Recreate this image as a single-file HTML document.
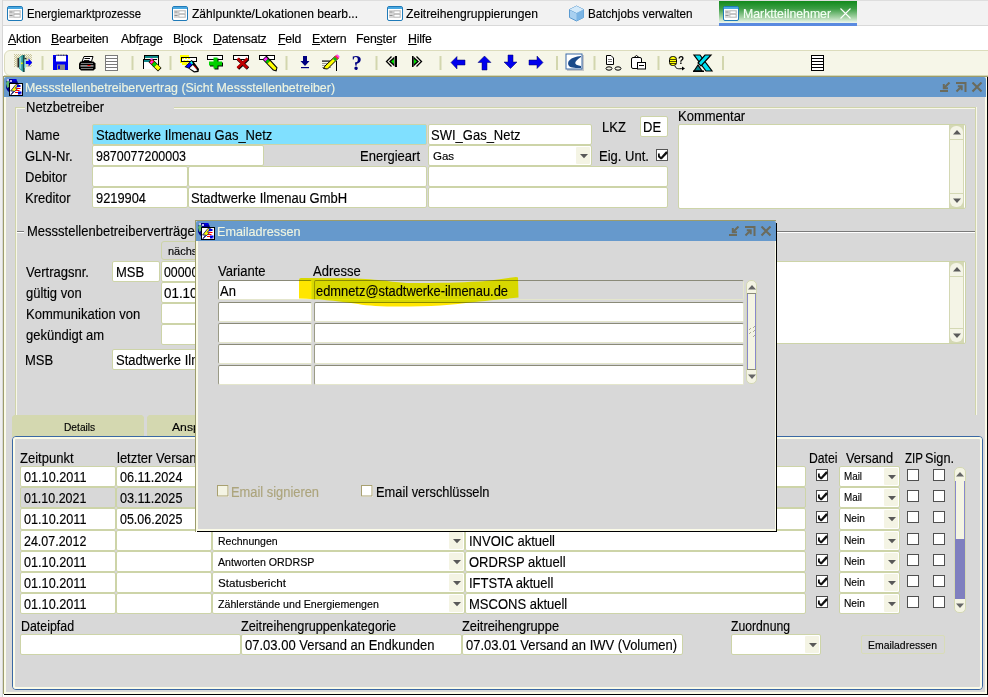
<!DOCTYPE html>
<html><head><meta charset="utf-8"><style>
*{margin:0;padding:0;box-sizing:content-box}
html,body{width:988px;height:697px;overflow:hidden;background:#fff;font-family:"Liberation Sans", sans-serif;}
div{position:absolute}
.t{white-space:nowrap;line-height:normal;-webkit-text-stroke:0.15px currentColor}
svg{position:absolute}
</style></head><body>
<div class="" style="left:0px;top:0px;width:988px;height:697px;background:#ffffff"></div><div class="" style="left:0px;top:0px;width:2px;height:697px;background:#efefef"></div><div class="" style="left:2px;top:0px;width:1px;height:697px;background:#d6d6d6"></div><div class="" style="left:3px;top:0px;width:985px;height:1px;background:#dedede"></div><div class="" style="left:3px;top:1px;width:985px;height:24px;background:#f2f2f2"></div><div class="" style="left:3px;top:25px;width:985px;height:1px;background:#d9d9d9"></div><svg style="left:7px;top:6px" width="16" height="15" viewBox="0 0 16 15"><rect x="0.5" y="0.5" width="15" height="14" rx="1.5" fill="#fff" stroke="#1f7ab8"/><rect x="1" y="1" width="14" height="2" fill="#4aa8e0"/><rect x="2" y="4" width="12" height="8" fill="#d8d8d8"/><rect x="2.5" y="5.5" width="3" height="1" fill="#909090"/><rect x="2.5" y="9" width="3" height="1" fill="#909090"/><rect x="7" y="5" width="6" height="2.5" fill="#fff" stroke="#a0a0a0" stroke-width="0.5"/><rect x="7" y="8.5" width="6" height="2.5" fill="#fff" stroke="#a0a0a0" stroke-width="0.5"/></svg><div class="t" style="left:27px;top:6.6px;font-size:12.6px;color:#000;transform:scaleX(0.9052);transform-origin:0 0;">Energiemarktprozesse</div><svg style="left:172px;top:6px" width="16" height="15" viewBox="0 0 16 15"><rect x="0.5" y="0.5" width="15" height="14" rx="1.5" fill="#fff" stroke="#1f7ab8"/><rect x="1" y="1" width="14" height="2" fill="#4aa8e0"/><rect x="2" y="4" width="12" height="8" fill="#d8d8d8"/><rect x="2.5" y="5.5" width="3" height="1" fill="#909090"/><rect x="2.5" y="9" width="3" height="1" fill="#909090"/><rect x="7" y="5" width="6" height="2.5" fill="#fff" stroke="#a0a0a0" stroke-width="0.5"/><rect x="7" y="8.5" width="6" height="2.5" fill="#fff" stroke="#a0a0a0" stroke-width="0.5"/></svg><div class="t" style="left:191.5px;top:6.6px;font-size:12.6px;color:#000;transform:scaleX(0.9564);transform-origin:0 0;">Zählpunkte/Lokationen bearb...</div><svg style="left:387px;top:6px" width="16" height="15" viewBox="0 0 16 15"><rect x="0.5" y="0.5" width="15" height="14" rx="1.5" fill="#fff" stroke="#1f7ab8"/><rect x="1" y="1" width="14" height="2" fill="#4aa8e0"/><rect x="2" y="4" width="12" height="8" fill="#d8d8d8"/><rect x="2.5" y="5.5" width="3" height="1" fill="#909090"/><rect x="2.5" y="9" width="3" height="1" fill="#909090"/><rect x="7" y="5" width="6" height="2.5" fill="#fff" stroke="#a0a0a0" stroke-width="0.5"/><rect x="7" y="8.5" width="6" height="2.5" fill="#fff" stroke="#a0a0a0" stroke-width="0.5"/></svg><div class="t" style="left:406px;top:6.6px;font-size:12.6px;color:#000;transform:scaleX(0.9625);transform-origin:0 0;">Zeitreihengruppierungen</div><svg style="left:568px;top:5px" width="17" height="17" viewBox="0 0 17 17"><path d="M8.5 1 L15.5 4.5 L15.5 12.5 L8.5 16 L1.5 12.5 L1.5 4.5 Z" fill="#a8d0f0" stroke="#5a9ad0" stroke-width="1"/><path d="M1.5 4.5 L8.5 8 L15.5 4.5" fill="none" stroke="#5a9ad0" stroke-width="1"/><path d="M8.5 8 L8.5 16 L15.5 12.5 L15.5 4.5 Z" fill="#7ab4e4"/><path d="M8.5 1 L15.5 4.5 L8.5 8 L1.5 4.5 Z" fill="#d4eafa"/></svg><div class="t" style="left:588px;top:6.6px;font-size:12.6px;color:#000;transform:scaleX(0.9275);transform-origin:0 0;">Batchjobs verwalten</div><div class="" style="left:719px;top:1px;width:138px;height:22px;background:linear-gradient(#118a1c 0%,#3c9e44 35%,#a8d4a8 75%,#f0f8f0 100%)"></div><div class="" style="left:719px;top:23px;width:138px;height:3px;background:#5a8ae0"></div><svg style="left:723px;top:6px" width="16" height="15" viewBox="0 0 16 15"><rect x="0.5" y="0.5" width="15" height="14" rx="1.5" fill="#fff" stroke="#1f7ab8"/><rect x="1" y="1" width="14" height="2" fill="#4aa8e0"/><rect x="2" y="4" width="12" height="8" fill="#d8d8d8"/><rect x="2.5" y="5.5" width="3" height="1" fill="#909090"/><rect x="2.5" y="9" width="3" height="1" fill="#909090"/><rect x="7" y="5" width="6" height="2.5" fill="#fff" stroke="#a0a0a0" stroke-width="0.5"/><rect x="7" y="8.5" width="6" height="2.5" fill="#fff" stroke="#a0a0a0" stroke-width="0.5"/></svg><div class="t" style="left:743px;top:6.6px;font-size:12.6px;color:#f4fff4;transform:scaleX(0.9752);transform-origin:0 0;">Marktteilnehmer</div><svg style="left:840px;top:8px" width="11" height="11" viewBox="0 0 11 11"><path d="M0.5 0.5 L10.5 10.5 M10.5 0.5 L0.5 10.5" stroke="#ffffff" stroke-width="1.1"/></svg><div class="t" style="left:8px;top:31.869999999999997px;font-size:12.3px;color:#000;letter-spacing:-0.2px"><u style="text-underline-offset:1px">A</u>ktion</div><div class="t" style="left:51px;top:31.869999999999997px;font-size:12.3px;color:#000;letter-spacing:-0.2px"><u style="text-underline-offset:1px">B</u>earbeiten</div><div class="t" style="left:121px;top:31.869999999999997px;font-size:12.3px;color:#000;letter-spacing:-0.2px">Abf<u style="text-underline-offset:1px">r</u>age</div><div class="t" style="left:173px;top:31.869999999999997px;font-size:12.3px;color:#000;letter-spacing:-0.2px">B<u style="text-underline-offset:1px">l</u>ock</div><div class="t" style="left:213px;top:31.869999999999997px;font-size:12.3px;color:#000;letter-spacing:-0.2px"><u style="text-underline-offset:1px">D</u>atensatz</div><div class="t" style="left:278px;top:31.869999999999997px;font-size:12.3px;color:#000;letter-spacing:-0.2px"><u style="text-underline-offset:1px">F</u>eld</div><div class="t" style="left:312px;top:31.869999999999997px;font-size:12.3px;color:#000;letter-spacing:-0.2px"><u style="text-underline-offset:1px">E</u>xtern</div><div class="t" style="left:356px;top:31.869999999999997px;font-size:12.3px;color:#000;letter-spacing:-0.2px">Fen<u style="text-underline-offset:1px">s</u>ter</div><div class="t" style="left:408px;top:31.869999999999997px;font-size:12.3px;color:#000;letter-spacing:-0.2px"><u style="text-underline-offset:1px">H</u>ilfe</div><div class="" style="left:4px;top:50px;width:990px;height:24px;background:#f6f6e8;border:1px solid #dcdcbc;border-radius:6px 0 0 6px"></div><div class="" style="left:4px;top:75px;width:984px;height:1px;background:#d4d8b4"></div><svg style="left:0;top:0" width="988" height="80" viewBox="0 0 988 80"><rect x="41.5" y="56" width="2" height="14" fill="#d2d6ae"/><rect x="131.5" y="56" width="2" height="14" fill="#d2d6ae"/><rect x="169.5" y="56" width="2" height="14" fill="#d2d6ae"/><rect x="285.5" y="56" width="2" height="14" fill="#d2d6ae"/><rect x="375.5" y="56" width="2" height="14" fill="#d2d6ae"/><rect x="439.5" y="56" width="2" height="14" fill="#d2d6ae"/><rect x="556" y="56" width="2" height="14" fill="#d2d6ae"/><rect x="593.5" y="56" width="2" height="14" fill="#d2d6ae"/><rect x="657.5" y="56" width="2" height="14" fill="#d2d6ae"/><rect x="722" y="56" width="2" height="14" fill="#d2d6ae"/><defs><pattern id="chk" x="0" y="0" width="2" height="2" patternUnits="userSpaceOnUse"><rect width="2" height="2" fill="#f4f4e4"/><rect width="1" height="1" fill="#c8c49a"/><rect x="1" y="1" width="1" height="1" fill="#c8c49a"/></pattern></defs><rect x="14" y="54" width="18" height="13" fill="url(#chk)"/><rect x="16" y="57" width="14" height="10" fill="#d8d4ac"/><rect x="17.5" y="58" width="1.6" height="9.5" fill="#2a2a2a"/><path d="M19 57.5 L22.5 55 L24.5 55 L24.5 72 L23 72 L19 68.5 Z" fill="#2a9a9a"/><path d="M19.5 58 L21.3 56.7 L21.3 69.5 L19.5 68 Z" fill="#98d4d4"/><rect x="23" y="55" width="1.5" height="17" fill="#1e4848"/><rect x="21" y="62.5" width="1.6" height="1.6" fill="#f0f000"/><rect x="24.5" y="58" width="2" height="1.4" fill="#2a2a2a"/><rect x="24.5" y="59.4" width="1.2" height="8.5" fill="#80f0ff"/><path d="M25.8 61 L28.6 61 L28.6 58.6 L32.2 62.5 L28.6 66.4 L28.6 64 L25.8 64 Z" fill="#0000ff"/><rect x="53" y="55" width="15" height="15" fill="#0000f0"/><rect x="56" y="55.5" width="10" height="6" fill="#fff"/><rect x="56.5" y="54.6" width="1" height="1" fill="#000"/><rect x="58.1" y="54.6" width="1" height="1" fill="#000"/><rect x="59.7" y="54.6" width="1" height="1" fill="#000"/><rect x="61.3" y="54.6" width="1" height="1" fill="#000"/><rect x="62.9" y="54.6" width="1" height="1" fill="#000"/><rect x="64.5" y="54.6" width="1" height="1" fill="#000"/><rect x="66.1" y="54.6" width="1" height="1" fill="#000"/><rect x="54" y="57.5" width="1" height="1" fill="#000"/><rect x="57" y="64.5" width="8" height="5.5" fill="#8a8a8a"/><rect x="58" y="65.5" width="2" height="3.5" fill="#0000f0"/><path d="M84 56.5 L93 56.5 L91.5 61.5 L82 61.5 Z" fill="#fff" stroke="#000" stroke-width="1"/><rect x="84.5" y="58" width="5.5" height="1" fill="#000"/><rect x="83.8" y="60" width="5.5" height="0.9" fill="#000"/><path d="M80.5 61.5 L93.5 61.5 L95.5 63.5 L95.5 68.5 L93.5 70.5 L81 70.5 L79 68.5 L79 63.5 Z" fill="#000"/><rect x="81" y="63" width="12" height="1" fill="#7a7a7a"/><rect x="80.5" y="65" width="13" height="1.8" fill="#8a8a8a"/><rect x="87.5" y="65" width="3" height="1" fill="#ff0000"/><rect x="81" y="68" width="12" height="1" fill="#7a7a7a"/><g shape-rendering="crispEdges"><rect x="105" y="55" width="13" height="16" fill="#7a7a7a"/><rect x="106" y="56" width="11" height="14" fill="#fff"/><rect x="106" y="58" width="11" height="1" fill="#7a7a7a"/><rect x="106" y="61" width="11" height="1" fill="#7a7a7a"/><rect x="106" y="64" width="11" height="1" fill="#7a7a7a"/><rect x="106" y="67" width="11" height="1" fill="#7a7a7a"/></g><g shape-rendering="crispEdges"><rect x="144" y="55" width="15" height="1.3" fill="#000"/><rect x="145" y="56.3" width="13" height="1.2" fill="#108888"/><rect x="158" y="55" width="1.3" height="10" fill="#000"/><rect x="144" y="55" width="1.3" height="4" fill="#000"/><rect x="143" y="59" width="14" height="1.3" fill="#000"/><rect x="144" y="60.3" width="6" height="1.2" fill="#108888"/><rect x="143" y="59" width="1.3" height="9.5" fill="#000"/><rect x="144.3" y="61.5" width="8" height="7" fill="#fff"/></g><path d="M148.5 62 L152 58.5 L161.5 68 L158 71.5 Z" fill="#000"/><path d="M149.3 62 L152 59.3 L154.5 61.8 L151.8 64.5 Z" fill="#ff1010"/><path d="M150 62.5 L152 60.5 L153.2 61.7 L151.2 63.7 Z" fill="#ff30ff"/><path d="M151.8 64.5 L154.5 61.8 L157 64.3 L154.3 67 Z" fill="#00d000"/><path d="M154.3 67 L157 64.3 L160.5 67.8 L158 70.5 Z" fill="#ffff00"/><rect x="150.5" y="58.5" width="2" height="1.5" fill="#ff30ff"/><rect x="180" y="55" width="9" height="8" fill="#ffff00"/><rect x="182" y="63" width="5" height="2" fill="#ffff00"/><rect x="181.5" y="57.5" width="15" height="4" fill="#fff" stroke="#000" stroke-width="1"/><rect x="182" y="58" width="2" height="1" fill="#ffff00"/><rect x="185" y="58" width="2" height="1" fill="#ffff00"/><rect x="188" y="58" width="2" height="1" fill="#ffff00"/><rect x="183.5" y="60" width="2" height="1" fill="#ffff00"/><rect x="186.5" y="60" width="2" height="1" fill="#ffff00"/><path d="M184.5 67 L191.5 60 L193.5 61.5 L199 69 L198.5 72 L194 72.5 L188.5 68.5 Z" fill="#000"/><path d="M186 66.5 L190 62.5 L192 64.5 L188.5 68 Z" fill="#0000ff"/><path d="M190 62.5 L191.5 61 L193 63.5 L192 64.5 Z" fill="#00ffff"/><path d="M189.5 68.3 L192.8 65 L197.5 70.5 L194.5 71.3 Z" fill="#fff"/><path d="M194 65.5 L196.5 68.5" stroke="#ff0000" stroke-width="1"/><rect x="207.5" y="55.5" width="15" height="4" fill="#fff" stroke="#000" stroke-width="1"/><rect x="214.5" y="58.5" width="4" height="11" fill="#000"/><rect x="210" y="62.5" width="13" height="4" fill="#000"/><rect x="213.5" y="57.5" width="4" height="11" fill="#00d000"/><rect x="209" y="61.5" width="13" height="4" fill="#00d000"/><rect x="233.5" y="55.5" width="15" height="4" fill="#fff" stroke="#000" stroke-width="1"/><path d="M238 59 L248 68.5 M248 59 L238 68.5" stroke="#000" stroke-width="3.4"/><path d="M237.5 58.5 L247.5 68 M247.5 58.5 L237.5 68" stroke="#c00000" stroke-width="2.6"/><rect x="259.5" y="55.5" width="15" height="4" fill="#fff" stroke="#000" stroke-width="1"/><path d="M262.5 59.5 L266.5 55.5 L277.5 67.5 L276.5 71.5 L273 70.5 Z" fill="#000"/><path d="M263.5 59.5 L266 57 L268 59 L265.5 61.5 Z" fill="#ff20ff"/><path d="M265.5 61.5 L268 59 L270 61 L267.5 63.5 Z" fill="#00c000"/><path d="M267.5 63.5 L270 61 L276.5 68 L275.5 70.3 L273.5 69.5 Z" fill="#ffff00"/><rect x="303" y="56" width="4" height="5.5" fill="#000080"/><path d="M300.5 61 L309.5 61 L305 66 Z" fill="#000080"/><rect x="301" y="67" width="8" height="1.2" fill="#000080"/><rect x="322" y="61" width="9" height="0.8" fill="#888"/><rect x="322" y="63" width="9" height="0.8" fill="#888"/><rect x="322" y="65" width="9" height="0.8" fill="#888"/><rect x="322" y="67" width="9" height="0.8" fill="#888"/><rect x="322" y="60.5" width="8" height="1" fill="#000"/><rect x="336" y="61" width="1" height="10" fill="#000"/><path d="M323.5 68.5 L325 66 L335.5 56 L338 58.5 L327.5 69 Z" fill="#ffff00" stroke="#000" stroke-width="1"/><path d="M334 57.5 L337 54.5 L339.5 57 L336.5 60 Z" fill="#ff2040"/><path d="M333 59 L335 57 L337 59 L335 61 Z" fill="#00c000"/><path d="M336 55.5 L337.5 54.5 L339.5 56.5 L338.5 58 Z" fill="#ff40ff"/><text x="351.5" y="70.5" font-family="Liberation Serif" font-weight="bold" font-size="20" fill="#000080" transform="translate(351.5 0) scale(1.05 1) translate(-351.5 0)">?</text><path d="M391.5 56.5 L386.5 61.5 L391.5 66.5" fill="none" stroke="#000" stroke-width="1.3"/><path d="M394.5 56.5 L389 61.5 L394.5 66.5 Z" fill="#000"/><path d="M394 59 L391 61.5 L394 64 Z" fill="#00e000"/><rect x="395" y="56" width="2" height="11" fill="#000"/><path d="M416.5 56.5 L421.5 61.5 L416.5 66.5" fill="none" stroke="#000" stroke-width="1.3"/><path d="M413.5 56.5 L419 61.5 L413.5 66.5 Z" fill="#000"/><path d="M414 59 L417 61.5 L414 64 Z" fill="#00e000"/><rect x="412" y="56" width="1.5" height="11" fill="#000"/><path d="M451 62.5 L457 56.5 L457 60 L465 60 L465 65 L457 65 L457 69 Z" fill="#0000ee" stroke="#000060" stroke-width="0.5"/><path d="M484.5 56 L491 62.5 L487 62.5 L487 70 L482 70 L482 62.5 L478 62.5 Z" fill="#0000ee" stroke="#000060" stroke-width="0.5"/><path d="M508 55 L513 55 L513 62 L517 62 L510.5 68.5 L504 62 L508 62 Z" fill="#0000ee" stroke="#000060" stroke-width="0.5"/><path d="M529 60 L537 60 L537 56 L543 62.5 L537 68.5 L537 65 L529 65 Z" fill="#0000ee" stroke="#000060" stroke-width="0.5"/><rect x="567" y="55" width="17" height="16" fill="#c8c8c8"/><rect x="566" y="54" width="16" height="15" fill="#fff" stroke="#3a6aa8" stroke-width="1"/><path d="M581 56 C570 57 566 62 569 66 C571 68 577 68 581 68 L581 66 C575 65 572 63 581 57 Z" fill="#1a4a8a"/><path d="M606.5 55.5 L611 55.5 L613.5 58 L613.5 64.5 L606.5 64.5 Z" fill="#fff" stroke="#000" stroke-width="1"/><rect x="608" y="59" width="4" height="0.8" fill="#555"/><rect x="608" y="61" width="4" height="0.8" fill="#555"/><ellipse cx="609" cy="68.5" rx="3" ry="1.7" fill="none" stroke="#000" stroke-width="1"/><ellipse cx="618" cy="68.5" rx="3" ry="1.7" fill="none" stroke="#000" stroke-width="1"/><rect x="631.5" y="57.5" width="10" height="11" rx="1.5" fill="#fff" stroke="#000" stroke-width="1"/><path d="M634 57.5 L636.5 55.5 L639 57.5 Z" fill="#fff" stroke="#000" stroke-width="1"/><rect x="637.5" y="62.5" width="8" height="6.5" fill="#fff" stroke="#000" stroke-width="1"/><rect x="639" y="65" width="5" height="1" fill="#000"/><rect x="669.5" y="56.5" width="7" height="9" rx="3" fill="#ffff00" stroke="#000" stroke-width="1"/><rect x="670" y="59" width="6" height="0.7" fill="#000"/><rect x="670" y="61" width="6" height="0.7" fill="#000"/><rect x="670" y="63" width="6" height="0.7" fill="#000"/><text x="678" y="64" font-family="Liberation Sans" font-weight="bold" font-size="10" fill="#000">?</text><path d="M675 66 C676 69 678 69 683 68.5" fill="none" stroke="#000" stroke-width="1"/><path d="M682 66.5 L685 68.5 L682 70.5 Z" fill="#000"/><path d="M694 55 L700 55 L712 71 L706 71 Z" fill="#00e0f0" stroke="#000" stroke-width="1.2"/><path d="M705 55 L711 55 L701 66 L698 63 Z" fill="#00e0f0" stroke="#000" stroke-width="1.2"/><path d="M694 71 L698 65 L702 71 Z" fill="#008890" stroke="#000" stroke-width="1.2"/><rect x="693" y="70.5" width="11" height="1.5" fill="#000"/><g shape-rendering="crispEdges"><rect x="811" y="55" width="13" height="16" rx="1" fill="#000"/><rect x="812" y="56" width="11" height="14" fill="#fff"/><rect x="812" y="58" width="11" height="1.2" fill="#000"/><rect x="812" y="61" width="11" height="1.2" fill="#000"/><rect x="812" y="64" width="11" height="1.2" fill="#000"/><rect x="812" y="67" width="11" height="1.2" fill="#000"/></g></svg><div class="" style="left:3px;top:76px;width:985px;height:1px;background:#9c9c6c"></div><div class="" style="left:3px;top:77px;width:1px;height:617px;background:#9c9c6c"></div><div class="" style="left:4px;top:97px;width:982px;height:596px;background:#d8d8d8"></div><div class="" style="left:4px;top:97px;width:2px;height:596px;background:#fbfbe8"></div><div class="" style="left:985px;top:77px;width:2px;height:617px;background:#fbfbe8"></div><div class="" style="left:987px;top:77px;width:1px;height:618px;background:#000"></div><div class="" style="left:4px;top:692px;width:983px;height:2px;background:#fbfbe8"></div><div class="" style="left:4px;top:694px;width:983px;height:1px;background:#000"></div><div class="" style="left:4px;top:77px;width:982px;height:20px;background:#6699cc;border-radius:2px 2px 0 0"></div><svg style="left:6px;top:79px" width="17" height="17" viewBox="0 0 17 17"><path d="M6 -0.5 C10 -0.5 12 2 12 5 L12 11 L3 13 C1 11.5 -0.5 9 -0.5 5.5 C-0.5 2 2.5 -0.5 6 -0.5 Z" fill="#00008a"/><path d="M0 4 C0.5 2.5 1.5 1.5 3 1 L3.5 3 L3 8 L1 9 Z" fill="#60b870"/><rect x="1" y="0" width="2" height="2" fill="#c0b8f0"/><rect x="4" y="1" width="2" height="2" fill="#c0b8f0"/><rect x="6.5" y="-0.5" width="4" height="3" fill="#0000e0"/><rect x="3" y="4" width="14" height="13" fill="#000"/><rect x="4" y="5" width="12" height="11" fill="#fff"/><path d="M9.8 5.6 L4.6 12 L7.6 12 L4.8 15.8 L12.2 9.2 L9.4 9.2 L12.6 5.6 Z" fill="#ffff00" stroke="#00007a" stroke-width="0.8"/><rect x="11" y="6" width="3.5" height="2" fill="#0000e0"/><rect x="10.5" y="9" width="4" height="1" fill="#ff0000"/><rect x="10" y="11" width="3.5" height="1" fill="#ff0000"/><rect x="9" y="13" width="3" height="1" fill="#ff0000"/><rect x="12" y="12.5" width="3.5" height="3" fill="#0000e0"/><rect x="14.5" y="14.5" width="1" height="1" fill="#fff"/></svg><div class="t" style="left:24.5px;top:80.78px;font-size:12.4px;color:#eef4e0;transform:scaleX(1.0004);transform-origin:0 0;">Messstellenbetreibervertrag (Sicht Messstellenbetreiber)</div><svg style="left:940px;top:82px" width="44" height="12" viewBox="0 0 44 12"><rect x="0" y="8" width="8" height="2" fill="#6b6b5c"/><path d="M9.5 0.5 L4 6" stroke="#6b6b5c" stroke-width="2"/><path d="M3.8 2 L3.8 6.2 L8 6.2" stroke="#6b6b5c" stroke-width="2" fill="none"/><rect x="16" y="0" width="10" height="2" fill="#6b6b5c"/><rect x="24.5" y="0" width="2" height="10" fill="#6b6b5c"/><path d="M16.5 9.5 L21.5 4.5" stroke="#6b6b5c" stroke-width="2"/><path d="M17.8 4.3 L21.7 4.3 L21.7 8.2" stroke="#6b6b5c" stroke-width="2" fill="none"/><path d="M32.5 0.5 L41.5 9.5 M41.5 0.5 L32.5 9.5" stroke="#6b6b5c" stroke-width="2.1"/></svg><div class="" style="left:15px;top:107px;width:1px;height:308px;background:#d0d4ac"></div><div class="" style="left:16px;top:108px;width:1px;height:307px;background:#f8f8e8"></div><div class="" style="left:975px;top:107px;width:1px;height:308px;background:#d0d4ac"></div><div class="" style="left:976px;top:107px;width:1px;height:308px;background:#f8f8e8"></div><div class="" style="left:15px;top:107px;width:10px;height:1px;background:#d0d4ac"></div><div class="" style="left:16px;top:108px;width:9px;height:1px;background:#f8f8e8"></div><div class="" style="left:174px;top:107px;width:801px;height:1px;background:#d0d4ac"></div><div class="" style="left:174px;top:108px;width:801px;height:1px;background:#f8f8e8"></div><div class="t" style="left:26px;top:99.51px;font-size:13.8px;color:#000;transform:scaleX(0.9426);transform-origin:0 0;">Netzbetreiber</div><div class="t" style="left:25px;top:127.51px;font-size:13.8px;color:#000;transform:scaleX(0.9423);transform-origin:0 0;">Name</div><div class="t" style="left:25px;top:148.51px;font-size:13.8px;color:#000;transform:scaleX(0.9422);transform-origin:0 0;">GLN-Nr.</div><div class="t" style="left:25px;top:169.51px;font-size:13.8px;color:#000;transform:scaleX(0.9427);transform-origin:0 0;">Debitor</div><div class="t" style="left:25px;top:190.51px;font-size:13.8px;color:#000;transform:scaleX(0.9427);transform-origin:0 0;">Kreditor</div><div class="f" style="left:92px;top:124px;width:333px;height:19px;background:#80e0ff;border:1px solid #cdd4a8;border-radius:2px;"></div><div class="t" style="left:95.5px;top:127.51px;font-size:13.8px;color:#000;transform:scaleX(0.9425);transform-origin:0 0;">Stadtwerke Ilmenau Gas_Netz</div><div class="f" style="left:428px;top:124px;width:162px;height:19px;background:#fff;border:1px solid #cdd4a8;border-radius:2px;"></div><div class="t" style="left:431px;top:127.51px;font-size:13.8px;color:#000;transform:scaleX(0.9423);transform-origin:0 0;">SWI_Gas_Netz</div><div class="t" style="left:602px;top:119.51px;font-size:13.8px;color:#000;transform:scaleX(0.9426);transform-origin:0 0;">LKZ</div><div class="f" style="left:640px;top:116px;width:26px;height:19px;background:#fff;border:1px solid #cdd4a8;border-radius:2px;"></div><div class="t" style="left:643px;top:119.51px;font-size:13.8px;color:#000;transform:scaleX(0.9421);transform-origin:0 0;">DE</div><div class="f" style="left:92px;top:145px;width:170px;height:19px;background:#fff;border:1px solid #cdd4a8;border-radius:2px;"></div><div class="t" style="left:95.5px;top:148.51px;font-size:13.8px;color:#000;transform:scaleX(0.9024);transform-origin:0 0;">9870077200003</div><div class="t" style="left:360px;top:148.51px;font-size:13.8px;color:#000;transform:scaleX(0.9428);transform-origin:0 0;">Energieart</div><div class="f" style="left:428px;top:145px;width:162px;height:19px;background:#fff;border:1px solid #cdd4a8;border-radius:2px;"></div><div class="" style="left:576px;top:147px;width:14px;height:17px;background:#f4f4e4;border-radius:1px"></div><svg style="left:579.5px;top:154px" width="8" height="5" viewBox="0 0 8 5"><path d="M0 0 L8 0 L4 4.2 Z" fill="#585858"/></svg><div class="t" style="left:433px;top:149.59px;font-size:11.5px;color:#000;">Gas</div><div class="t" style="left:599px;top:148.51px;font-size:13.8px;color:#000;transform:scaleX(0.9427);transform-origin:0 0;">Eig. Unt.</div><svg style="left:656px;top:149px" width="12" height="12" viewBox="0 0 12 12"><rect x="0.5" y="0.5" width="11" height="11" fill="#fff" stroke="#555555" stroke-width="1"/><path d="M2 4.6 L3.8 4.6 L3.8 6.8 L5 7.9 L9.8 2.6 L11.4 2.6 L11.4 4.4 L5.8 10.3 L4.5 10.3 L2 7.9 Z" fill="#111"/></svg><div class="f" style="left:92px;top:166px;width:94px;height:19px;background:#fff;border:1px solid #cdd4a8;border-radius:2px;"></div><div class="f" style="left:188px;top:166px;width:237px;height:19px;background:#fff;border:1px solid #cdd4a8;border-radius:2px;"></div><div class="f" style="left:428px;top:166px;width:238px;height:19px;background:#fff;border:1px solid #cdd4a8;border-radius:2px;"></div><div class="f" style="left:92px;top:187px;width:94px;height:19px;background:#fff;border:1px solid #cdd4a8;border-radius:2px;"></div><div class="f" style="left:188px;top:187px;width:237px;height:19px;background:#fff;border:1px solid #cdd4a8;border-radius:2px;"></div><div class="f" style="left:428px;top:187px;width:238px;height:19px;background:#fff;border:1px solid #cdd4a8;border-radius:2px;"></div><div class="t" style="left:95.5px;top:190.51px;font-size:13.8px;color:#000;transform:scaleX(0.9310);transform-origin:0 0;">9219904</div><div class="t" style="left:191px;top:190.51px;font-size:13.8px;color:#000;transform:scaleX(0.9425);transform-origin:0 0;">Stadtwerke Ilmenau GmbH</div><div class="t" style="left:678px;top:108.51px;font-size:13.8px;color:#000;transform:scaleX(0.9424);transform-origin:0 0;">Kommentar</div><div class="f" style="left:678px;top:124px;width:286px;height:83px;background:#fff;border:1px solid #cdd4a8;border-radius:2px;"></div><div class="" style="left:949px;top:125px;width:15px;height:83px;background:#d4d8b4"></div><div style="left:950px;top:126px;width:13px;height:81px;background:#f4f4e6;border-radius:6px"></div><div class="" style="left:950px;top:139px;width:13px;height:1px;background:#d4d8b4"></div><div class="" style="left:950px;top:193px;width:13px;height:1px;background:#d4d8b4"></div><svg style="left:951.5px;top:129px" width="10" height="6" viewBox="0 0 10 6"><path d="M1 5.5 L9 5.5 L5 1 Z" fill="#5a5a5a"/></svg><svg style="left:951.5px;top:198px" width="10" height="6" viewBox="0 0 10 6"><path d="M1 0.5 L9 0.5 L5 5 Z" fill="#5a5a5a"/></svg><div class="" style="left:17px;top:231px;width:958px;height:1px;background:#7a7a7a"></div><div class="" style="left:17px;top:232px;width:958px;height:1px;background:#ffffff"></div><div class="" style="left:24px;top:224px;width:168px;height:14px;background:#d8d8d8"></div><div class="t" style="left:26.5px;top:223.51px;font-size:13.8px;color:#000;transform:scaleX(0.9426);transform-origin:0 0;">Messstellenbetreiberverträge</div><div class="t" style="left:26px;top:264.51px;font-size:13.8px;color:#000;transform:scaleX(0.9426);transform-origin:0 0;">Vertragsnr.</div><div class="t" style="left:26px;top:285.51px;font-size:13.8px;color:#000;transform:scaleX(0.9428);transform-origin:0 0;">gültig von</div><div class="t" style="left:26px;top:306.51px;font-size:13.8px;color:#000;transform:scaleX(0.9425);transform-origin:0 0;">Kommunikation von</div><div class="t" style="left:26px;top:327.51px;font-size:13.8px;color:#000;transform:scaleX(0.9427);transform-origin:0 0;">gekündigt am</div><div class="t" style="left:25px;top:352.51px;font-size:13.8px;color:#000;transform:scaleX(0.9420);transform-origin:0 0;">MSB</div><div class="f" style="left:161px;top:241px;width:58px;height:17px;background:#d8d8d8;border:1px solid #cdd4a8;border-radius:3px;"></div><div class="t" style="left:168px;top:245.04px;font-size:11px;color:#000;">nächste</div><div class="f" style="left:112px;top:261px;width:46px;height:19px;background:#fff;border:1px solid #cdd4a8;border-radius:2px;"></div><div class="t" style="left:116px;top:264.51px;font-size:13.8px;color:#000;transform:scaleX(0.9420);transform-origin:0 0;">MSB</div><div class="f" style="left:161px;top:261px;width:77px;height:19px;background:#fff;border:1px solid #cdd4a8;border-radius:2px;"></div><div class="t" style="left:164px;top:264.51px;font-size:13.8px;color:#000;transform:scaleX(0.8938);transform-origin:0 0;">0000000</div><div class="f" style="left:161px;top:282px;width:77px;height:19px;background:#fff;border:1px solid #cdd4a8;border-radius:2px;"></div><div class="t" style="left:164px;top:285.51px;font-size:13.8px;color:#000;transform:scaleX(0.9706);transform-origin:0 0;">01.10.2011</div><div class="f" style="left:161px;top:303px;width:77px;height:19px;background:#fff;border:1px solid #cdd4a8;border-radius:2px;"></div><div class="f" style="left:161px;top:324px;width:77px;height:19px;background:#fff;border:1px solid #cdd4a8;border-radius:2px;"></div><div class="f" style="left:112px;top:349px;width:186px;height:19px;background:#fff;border:1px solid #cdd4a8;border-radius:2px;"></div><div class="t" style="left:116px;top:352.51px;font-size:13.8px;color:#000;transform:scaleX(0.9426);transform-origin:0 0;">Stadtwerke Ilmenau</div><div class="f" style="left:700px;top:261px;width:264px;height:81px;background:#fff;border:1px solid #cdd4a8;border-radius:2px;"></div><div class="" style="left:949px;top:262px;width:15px;height:81px;background:#d4d8b4"></div><div style="left:950px;top:263px;width:13px;height:79px;background:#f4f4e6;border-radius:6px"></div><div class="" style="left:950px;top:276px;width:13px;height:1px;background:#d4d8b4"></div><div class="" style="left:950px;top:328px;width:13px;height:1px;background:#d4d8b4"></div><svg style="left:951.5px;top:266px" width="10" height="6" viewBox="0 0 10 6"><path d="M1 5.5 L9 5.5 L5 1 Z" fill="#5a5a5a"/></svg><svg style="left:951.5px;top:333px" width="10" height="6" viewBox="0 0 10 6"><path d="M1 0.5 L9 0.5 L5 5 Z" fill="#5a5a5a"/></svg><div style="left:12px;top:415px;width:132px;height:22px;background:#d4d8b0;clip-path:polygon(2px 0,130px 0,132px 2px,132px 22px,0 22px,0 2px)"></div><div style="left:147px;top:415px;width:200px;height:22px;background:#d4d8b0;clip-path:polygon(2px 0,198px 0,200px 2px,200px 22px,0 22px,0 2px)"></div><div class="t" style="left:63.5px;top:421.04px;font-size:11px;color:#000;transform:scaleX(0.9279);transform-origin:0 0;">Details</div><div class="t" style="left:171.5px;top:421.04px;font-size:11px;color:#000;transform:scaleX(1.1060);transform-origin:0 0;">Ansprechpartner</div><div style="left:12px;top:436px;width:969px;height:252px;border:1px solid #3a68a4;border-radius:4px;background:#d8d8d8"></div><div style="left:13px;top:437px;width:965px;height:248px;border:2px solid #fbfbe8;border-radius:3px"></div><div class="t" style="left:20px;top:450.51px;font-size:13.8px;color:#000;transform:scaleX(0.9427);transform-origin:0 0;">Zeitpunkt</div><div class="t" style="left:117px;top:450.51px;font-size:13.8px;color:#000;transform:scaleX(0.9426);transform-origin:0 0;">letzter Versand</div><div class="t" style="left:808.5px;top:450.51px;font-size:13.8px;color:#000;transform:scaleX(0.8850);transform-origin:0 0;">Datei</div><div class="t" style="left:845.5px;top:450.51px;font-size:13.8px;color:#000;transform:scaleX(0.9284);transform-origin:0 0;">Versand</div><div class="t" style="left:905px;top:450.51px;font-size:13.8px;color:#000;transform:scaleX(0.8390);transform-origin:0 0;">ZIP</div><div class="t" style="left:925px;top:450.51px;font-size:13.8px;color:#000;transform:scaleX(0.9225);transform-origin:0 0;">Sign.</div><div class="f" style="left:20px;top:466px;width:94px;height:19px;background:#fff;border:1px solid #cdd4a8;border-radius:2px;"></div><div class="f" style="left:116px;top:466px;width:94px;height:19px;background:#fff;border:1px solid #cdd4a8;border-radius:2px;"></div><div class="f" style="left:212px;top:466px;width:251px;height:19px;background:#fff;border:1px solid #cdd4a8;border-radius:2px;"></div><div class="" style="left:449px;top:468px;width:14px;height:17px;background:#f4f4e4;border-radius:1px"></div><svg style="left:452.5px;top:475px" width="8" height="5" viewBox="0 0 8 5"><path d="M0 0 L8 0 L4 4.2 Z" fill="#585858"/></svg><div class="f" style="left:465px;top:466px;width:339px;height:19px;background:#fff;border:1px solid #cdd4a8;border-radius:2px;"></div><div class="t" style="left:23.5px;top:469.51px;font-size:13.8px;color:#000;transform:scaleX(0.9176);transform-origin:0 0;">01.10.2011</div><div class="t" style="left:119.5px;top:469.51px;font-size:13.8px;color:#000;transform:scaleX(0.9176);transform-origin:0 0;">06.11.2024</div><svg style="left:816px;top:469px" width="12" height="12" viewBox="0 0 12 12"><rect x="0.5" y="0.5" width="11" height="11" fill="#fff" stroke="#4a4a4a" stroke-width="1"/><path d="M2 4.6 L3.8 4.6 L3.8 6.8 L5 7.9 L9.8 2.6 L11.4 2.6 L11.4 4.4 L5.8 10.3 L4.5 10.3 L2 7.9 Z" fill="#111"/></svg><div class="f" style="left:839px;top:466px;width:59px;height:19px;background:#fff;border:1px solid #cdd4a8;border-radius:2px;"></div><div class="" style="left:884px;top:468px;width:14px;height:17px;background:#f4f4e4;border-radius:1px"></div><svg style="left:887.5px;top:475px" width="8" height="5" viewBox="0 0 8 5"><path d="M0 0 L8 0 L4 4.2 Z" fill="#585858"/></svg><div class="t" style="left:843.5px;top:470.04px;font-size:11px;color:#000;transform:scaleX(0.8930);transform-origin:0 0;">Mail</div><svg style="left:907px;top:469px" width="12" height="12" viewBox="0 0 12 12"><rect x="0.5" y="0.5" width="11" height="11" fill="#fff" stroke="#505050" stroke-width="1"/></svg><svg style="left:933px;top:469px" width="12" height="12" viewBox="0 0 12 12"><rect x="0.5" y="0.5" width="11" height="11" fill="#fff" stroke="#505050" stroke-width="1"/></svg><div class="f" style="left:20px;top:487px;width:94px;height:19px;background:#d8d8d8;border:1px solid #cdd4a8;border-radius:2px;"></div><div class="f" style="left:116px;top:487px;width:94px;height:19px;background:#d8d8d8;border:1px solid #cdd4a8;border-radius:2px;"></div><div class="f" style="left:212px;top:487px;width:251px;height:19px;background:#fff;border:1px solid #cdd4a8;border-radius:2px;"></div><div class="" style="left:449px;top:489px;width:14px;height:17px;background:#f4f4e4;border-radius:1px"></div><svg style="left:452.5px;top:496px" width="8" height="5" viewBox="0 0 8 5"><path d="M0 0 L8 0 L4 4.2 Z" fill="#585858"/></svg><div class="f" style="left:465px;top:487px;width:339px;height:19px;background:#d8d8d8;border:1px solid #cdd4a8;border-radius:2px;"></div><div class="t" style="left:23.5px;top:490.51px;font-size:13.8px;color:#000;transform:scaleX(0.9039);transform-origin:0 0;">01.10.2021</div><div class="t" style="left:119.5px;top:490.51px;font-size:13.8px;color:#000;transform:scaleX(0.9176);transform-origin:0 0;">03.11.2025</div><svg style="left:816px;top:490px" width="12" height="12" viewBox="0 0 12 12"><rect x="0.5" y="0.5" width="11" height="11" fill="#fff" stroke="#4a4a4a" stroke-width="1"/><path d="M2 4.6 L3.8 4.6 L3.8 6.8 L5 7.9 L9.8 2.6 L11.4 2.6 L11.4 4.4 L5.8 10.3 L4.5 10.3 L2 7.9 Z" fill="#111"/></svg><div class="f" style="left:839px;top:487px;width:59px;height:19px;background:#fff;border:1px solid #cdd4a8;border-radius:2px;"></div><div class="" style="left:884px;top:489px;width:14px;height:17px;background:#f4f4e4;border-radius:1px"></div><svg style="left:887.5px;top:496px" width="8" height="5" viewBox="0 0 8 5"><path d="M0 0 L8 0 L4 4.2 Z" fill="#585858"/></svg><div class="t" style="left:843.5px;top:491.04px;font-size:11px;color:#000;transform:scaleX(0.8930);transform-origin:0 0;">Mail</div><svg style="left:907px;top:490px" width="12" height="12" viewBox="0 0 12 12"><rect x="0.5" y="0.5" width="11" height="11" fill="#fff" stroke="#505050" stroke-width="1"/></svg><svg style="left:933px;top:490px" width="12" height="12" viewBox="0 0 12 12"><rect x="0.5" y="0.5" width="11" height="11" fill="#fff" stroke="#505050" stroke-width="1"/></svg><div class="f" style="left:20px;top:508px;width:94px;height:20px;background:#fff;border:1px solid #cdd4a8;border-radius:2px;"></div><div class="f" style="left:116px;top:508px;width:94px;height:20px;background:#fff;border:1px solid #cdd4a8;border-radius:2px;"></div><div class="f" style="left:212px;top:508px;width:251px;height:20px;background:#fff;border:1px solid #cdd4a8;border-radius:2px;"></div><div class="" style="left:449px;top:510px;width:14px;height:18px;background:#f4f4e4;border-radius:1px"></div><svg style="left:452.5px;top:517px" width="8" height="5" viewBox="0 0 8 5"><path d="M0 0 L8 0 L4 4.2 Z" fill="#585858"/></svg><div class="f" style="left:465px;top:508px;width:339px;height:20px;background:#fff;border:1px solid #cdd4a8;border-radius:2px;"></div><div class="t" style="left:23.5px;top:511.51px;font-size:13.8px;color:#000;transform:scaleX(0.9176);transform-origin:0 0;">01.10.2011</div><div class="t" style="left:119.5px;top:511.51px;font-size:13.8px;color:#000;transform:scaleX(0.9039);transform-origin:0 0;">05.06.2025</div><svg style="left:816px;top:511px" width="12" height="12" viewBox="0 0 12 12"><rect x="0.5" y="0.5" width="11" height="11" fill="#fff" stroke="#4a4a4a" stroke-width="1"/><path d="M2 4.6 L3.8 4.6 L3.8 6.8 L5 7.9 L9.8 2.6 L11.4 2.6 L11.4 4.4 L5.8 10.3 L4.5 10.3 L2 7.9 Z" fill="#111"/></svg><div class="f" style="left:839px;top:508px;width:59px;height:20px;background:#fff;border:1px solid #cdd4a8;border-radius:2px;"></div><div class="" style="left:884px;top:510px;width:14px;height:18px;background:#f4f4e4;border-radius:1px"></div><svg style="left:887.5px;top:517px" width="8" height="5" viewBox="0 0 8 5"><path d="M0 0 L8 0 L4 4.2 Z" fill="#585858"/></svg><div class="t" style="left:843.5px;top:512.04px;font-size:11px;color:#000;transform:scaleX(0.9282);transform-origin:0 0;">Nein</div><svg style="left:907px;top:511px" width="12" height="12" viewBox="0 0 12 12"><rect x="0.5" y="0.5" width="11" height="11" fill="#fff" stroke="#505050" stroke-width="1"/></svg><svg style="left:933px;top:511px" width="12" height="12" viewBox="0 0 12 12"><rect x="0.5" y="0.5" width="11" height="11" fill="#fff" stroke="#505050" stroke-width="1"/></svg><div class="f" style="left:20px;top:530px;width:94px;height:19px;background:#fff;border:1px solid #cdd4a8;border-radius:2px;"></div><div class="f" style="left:116px;top:530px;width:94px;height:19px;background:#fff;border:1px solid #cdd4a8;border-radius:2px;"></div><div class="f" style="left:212px;top:530px;width:251px;height:19px;background:#fff;border:1px solid #cdd4a8;border-radius:2px;"></div><div class="" style="left:449px;top:532px;width:14px;height:17px;background:#f4f4e4;border-radius:1px"></div><svg style="left:452.5px;top:539px" width="8" height="5" viewBox="0 0 8 5"><path d="M0 0 L8 0 L4 4.2 Z" fill="#585858"/></svg><div class="f" style="left:465px;top:530px;width:339px;height:19px;background:#fff;border:1px solid #cdd4a8;border-radius:2px;"></div><div class="t" style="left:23.5px;top:533.51px;font-size:13.8px;color:#000;transform:scaleX(0.9039);transform-origin:0 0;">24.07.2012</div><div class="t" style="left:217.5px;top:535.04px;font-size:11px;color:#000;transform:scaleX(0.9562);transform-origin:0 0;">Rechnungen</div><div class="t" style="left:469px;top:533.51px;font-size:13.8px;color:#000;transform:scaleX(0.9425);transform-origin:0 0;">INVOIC aktuell</div><svg style="left:816px;top:533px" width="12" height="12" viewBox="0 0 12 12"><rect x="0.5" y="0.5" width="11" height="11" fill="#fff" stroke="#4a4a4a" stroke-width="1"/><path d="M2 4.6 L3.8 4.6 L3.8 6.8 L5 7.9 L9.8 2.6 L11.4 2.6 L11.4 4.4 L5.8 10.3 L4.5 10.3 L2 7.9 Z" fill="#111"/></svg><div class="f" style="left:839px;top:530px;width:59px;height:19px;background:#fff;border:1px solid #cdd4a8;border-radius:2px;"></div><div class="" style="left:884px;top:532px;width:14px;height:17px;background:#f4f4e4;border-radius:1px"></div><svg style="left:887.5px;top:539px" width="8" height="5" viewBox="0 0 8 5"><path d="M0 0 L8 0 L4 4.2 Z" fill="#585858"/></svg><div class="t" style="left:843.5px;top:534.04px;font-size:11px;color:#000;transform:scaleX(0.9282);transform-origin:0 0;">Nein</div><svg style="left:907px;top:533px" width="12" height="12" viewBox="0 0 12 12"><rect x="0.5" y="0.5" width="11" height="11" fill="#fff" stroke="#505050" stroke-width="1"/></svg><svg style="left:933px;top:533px" width="12" height="12" viewBox="0 0 12 12"><rect x="0.5" y="0.5" width="11" height="11" fill="#fff" stroke="#505050" stroke-width="1"/></svg><div class="f" style="left:20px;top:551px;width:94px;height:19px;background:#fff;border:1px solid #cdd4a8;border-radius:2px;"></div><div class="f" style="left:116px;top:551px;width:94px;height:19px;background:#fff;border:1px solid #cdd4a8;border-radius:2px;"></div><div class="f" style="left:212px;top:551px;width:251px;height:19px;background:#fff;border:1px solid #cdd4a8;border-radius:2px;"></div><div class="" style="left:449px;top:553px;width:14px;height:17px;background:#f4f4e4;border-radius:1px"></div><svg style="left:452.5px;top:560px" width="8" height="5" viewBox="0 0 8 5"><path d="M0 0 L8 0 L4 4.2 Z" fill="#585858"/></svg><div class="f" style="left:465px;top:551px;width:339px;height:19px;background:#fff;border:1px solid #cdd4a8;border-radius:2px;"></div><div class="t" style="left:23.5px;top:554.51px;font-size:13.8px;color:#000;transform:scaleX(0.9176);transform-origin:0 0;">01.10.2011</div><div class="t" style="left:217.5px;top:556.04px;font-size:11px;color:#000;transform:scaleX(0.9670);transform-origin:0 0;">Antworten ORDRSP</div><div class="t" style="left:469px;top:554.51px;font-size:13.8px;color:#000;transform:scaleX(0.9424);transform-origin:0 0;">ORDRSP aktuell</div><svg style="left:816px;top:554px" width="12" height="12" viewBox="0 0 12 12"><rect x="0.5" y="0.5" width="11" height="11" fill="#fff" stroke="#4a4a4a" stroke-width="1"/><path d="M2 4.6 L3.8 4.6 L3.8 6.8 L5 7.9 L9.8 2.6 L11.4 2.6 L11.4 4.4 L5.8 10.3 L4.5 10.3 L2 7.9 Z" fill="#111"/></svg><div class="f" style="left:839px;top:551px;width:59px;height:19px;background:#fff;border:1px solid #cdd4a8;border-radius:2px;"></div><div class="" style="left:884px;top:553px;width:14px;height:17px;background:#f4f4e4;border-radius:1px"></div><svg style="left:887.5px;top:560px" width="8" height="5" viewBox="0 0 8 5"><path d="M0 0 L8 0 L4 4.2 Z" fill="#585858"/></svg><div class="t" style="left:843.5px;top:555.04px;font-size:11px;color:#000;transform:scaleX(0.9282);transform-origin:0 0;">Nein</div><svg style="left:907px;top:554px" width="12" height="12" viewBox="0 0 12 12"><rect x="0.5" y="0.5" width="11" height="11" fill="#fff" stroke="#505050" stroke-width="1"/></svg><svg style="left:933px;top:554px" width="12" height="12" viewBox="0 0 12 12"><rect x="0.5" y="0.5" width="11" height="11" fill="#fff" stroke="#505050" stroke-width="1"/></svg><div class="f" style="left:20px;top:572px;width:94px;height:19px;background:#fff;border:1px solid #cdd4a8;border-radius:2px;"></div><div class="f" style="left:116px;top:572px;width:94px;height:19px;background:#fff;border:1px solid #cdd4a8;border-radius:2px;"></div><div class="f" style="left:212px;top:572px;width:251px;height:19px;background:#fff;border:1px solid #cdd4a8;border-radius:2px;"></div><div class="" style="left:449px;top:574px;width:14px;height:17px;background:#f4f4e4;border-radius:1px"></div><svg style="left:452.5px;top:581px" width="8" height="5" viewBox="0 0 8 5"><path d="M0 0 L8 0 L4 4.2 Z" fill="#585858"/></svg><div class="f" style="left:465px;top:572px;width:339px;height:19px;background:#fff;border:1px solid #cdd4a8;border-radius:2px;"></div><div class="t" style="left:23.5px;top:575.51px;font-size:13.8px;color:#000;transform:scaleX(0.9176);transform-origin:0 0;">01.10.2011</div><div class="t" style="left:217.5px;top:577.04px;font-size:11px;color:#000;transform:scaleX(1.0584);transform-origin:0 0;">Statusbericht</div><div class="t" style="left:469px;top:575.51px;font-size:13.8px;color:#000;transform:scaleX(0.9427);transform-origin:0 0;">IFTSTA aktuell</div><svg style="left:816px;top:575px" width="12" height="12" viewBox="0 0 12 12"><rect x="0.5" y="0.5" width="11" height="11" fill="#fff" stroke="#4a4a4a" stroke-width="1"/><path d="M2 4.6 L3.8 4.6 L3.8 6.8 L5 7.9 L9.8 2.6 L11.4 2.6 L11.4 4.4 L5.8 10.3 L4.5 10.3 L2 7.9 Z" fill="#111"/></svg><div class="f" style="left:839px;top:572px;width:59px;height:19px;background:#fff;border:1px solid #cdd4a8;border-radius:2px;"></div><div class="" style="left:884px;top:574px;width:14px;height:17px;background:#f4f4e4;border-radius:1px"></div><svg style="left:887.5px;top:581px" width="8" height="5" viewBox="0 0 8 5"><path d="M0 0 L8 0 L4 4.2 Z" fill="#585858"/></svg><div class="t" style="left:843.5px;top:576.04px;font-size:11px;color:#000;transform:scaleX(0.9282);transform-origin:0 0;">Nein</div><svg style="left:907px;top:575px" width="12" height="12" viewBox="0 0 12 12"><rect x="0.5" y="0.5" width="11" height="11" fill="#fff" stroke="#505050" stroke-width="1"/></svg><svg style="left:933px;top:575px" width="12" height="12" viewBox="0 0 12 12"><rect x="0.5" y="0.5" width="11" height="11" fill="#fff" stroke="#505050" stroke-width="1"/></svg><div class="f" style="left:20px;top:593px;width:94px;height:19px;background:#fff;border:1px solid #cdd4a8;border-radius:2px;"></div><div class="f" style="left:116px;top:593px;width:94px;height:19px;background:#fff;border:1px solid #cdd4a8;border-radius:2px;"></div><div class="f" style="left:212px;top:593px;width:251px;height:19px;background:#fff;border:1px solid #cdd4a8;border-radius:2px;"></div><div class="" style="left:449px;top:595px;width:14px;height:17px;background:#f4f4e4;border-radius:1px"></div><svg style="left:452.5px;top:602px" width="8" height="5" viewBox="0 0 8 5"><path d="M0 0 L8 0 L4 4.2 Z" fill="#585858"/></svg><div class="f" style="left:465px;top:593px;width:339px;height:19px;background:#fff;border:1px solid #cdd4a8;border-radius:2px;"></div><div class="t" style="left:23.5px;top:596.51px;font-size:13.8px;color:#000;transform:scaleX(0.9176);transform-origin:0 0;">01.10.2011</div><div class="t" style="left:217.5px;top:598.04px;font-size:11px;color:#000;transform:scaleX(0.9671);transform-origin:0 0;">Zählerstände und Energiemengen</div><div class="t" style="left:469px;top:596.51px;font-size:13.8px;color:#000;transform:scaleX(0.9423);transform-origin:0 0;">MSCONS aktuell</div><svg style="left:816px;top:596px" width="12" height="12" viewBox="0 0 12 12"><rect x="0.5" y="0.5" width="11" height="11" fill="#fff" stroke="#4a4a4a" stroke-width="1"/><path d="M2 4.6 L3.8 4.6 L3.8 6.8 L5 7.9 L9.8 2.6 L11.4 2.6 L11.4 4.4 L5.8 10.3 L4.5 10.3 L2 7.9 Z" fill="#111"/></svg><div class="f" style="left:839px;top:593px;width:59px;height:19px;background:#fff;border:1px solid #cdd4a8;border-radius:2px;"></div><div class="" style="left:884px;top:595px;width:14px;height:17px;background:#f4f4e4;border-radius:1px"></div><svg style="left:887.5px;top:602px" width="8" height="5" viewBox="0 0 8 5"><path d="M0 0 L8 0 L4 4.2 Z" fill="#585858"/></svg><div class="t" style="left:843.5px;top:597.04px;font-size:11px;color:#000;transform:scaleX(0.9282);transform-origin:0 0;">Nein</div><svg style="left:907px;top:596px" width="12" height="12" viewBox="0 0 12 12"><rect x="0.5" y="0.5" width="11" height="11" fill="#fff" stroke="#505050" stroke-width="1"/></svg><svg style="left:933px;top:596px" width="12" height="12" viewBox="0 0 12 12"><rect x="0.5" y="0.5" width="11" height="11" fill="#fff" stroke="#505050" stroke-width="1"/></svg><div style="left:954px;top:467px;width:10px;height:144px;background:#f4f4e4;border:1px solid #d4d8b4;border-radius:5px"></div><div class="" style="left:955px;top:481px;width:1px;height:118px;background:#8888cc"></div><div class="" style="left:964px;top:481px;width:1px;height:118px;background:#8888cc"></div><div class="" style="left:955px;top:539px;width:10px;height:60px;background:#7f7fbf"></div><svg style="left:955px;top:471px" width="10" height="6" viewBox="0 0 10 6"><path d="M1 5.5 L9 5.5 L5 1 Z" fill="#666"/></svg><svg style="left:955px;top:603px" width="10" height="6" viewBox="0 0 10 6"><path d="M1 0.5 L9 0.5 L5 5 Z" fill="#666"/></svg><div class="t" style="left:20.5px;top:618.51px;font-size:13.8px;color:#000;transform:scaleX(0.8976);transform-origin:0 0;">Dateipfad</div><div class="t" style="left:241px;top:618.51px;font-size:13.8px;color:#000;transform:scaleX(0.9188);transform-origin:0 0;">Zeitreihengruppenkategorie</div><div class="t" style="left:462px;top:618.51px;font-size:13.8px;color:#000;transform:scaleX(0.9302);transform-origin:0 0;">Zeitreihengruppe</div><div class="t" style="left:731px;top:618.51px;font-size:13.8px;color:#000;transform:scaleX(0.8843);transform-origin:0 0;">Zuordnung</div><div class="f" style="left:20px;top:634px;width:219px;height:19px;background:#fff;border:1px solid #cdd4a8;border-radius:2px;"></div><div class="f" style="left:241px;top:634px;width:219px;height:19px;background:#fff;border:1px solid #cdd4a8;border-radius:2px;"></div><div class="f" style="left:462px;top:634px;width:219px;height:19px;background:#fff;border:1px solid #cdd4a8;border-radius:2px;"></div><div class="t" style="left:244.5px;top:637.51px;font-size:13.8px;color:#000;transform:scaleX(0.9428);transform-origin:0 0;">07.03.00 Versand an Endkunden</div><div class="t" style="left:465.5px;top:637.51px;font-size:13.8px;color:#000;transform:scaleX(0.9427);transform-origin:0 0;">07.03.01 Versand an IWV (Volumen)</div><div class="f" style="left:731px;top:634px;width:88px;height:19px;background:#fff;border:1px solid #cdd4a8;border-radius:2px;"></div><div class="" style="left:805px;top:636px;width:14px;height:17px;background:#f4f4e4;border-radius:1px"></div><svg style="left:808.5px;top:643px" width="8" height="5" viewBox="0 0 8 5"><path d="M0 0 L8 0 L4 4.2 Z" fill="#585858"/></svg><div class="f" style="left:861px;top:635px;width:82px;height:17px;background:#d8d8d8;border:1px solid #d8dcb8;border-radius:2px;"></div><div class="t" style="left:868px;top:639.04px;font-size:11px;color:#000;transform:scaleX(0.9480);transform-origin:0 0;">Emailadressen</div><div class="" style="left:195px;top:220px;width:581px;height:1px;background:#9c9c6c"></div><div class="" style="left:195px;top:220px;width:1px;height:312px;background:#9c9c6c"></div><div class="" style="left:196px;top:241px;width:2px;height:289px;background:#fbfbe8"></div><div class="" style="left:198px;top:241px;width:577px;height:288px;background:#d8d8d8"></div><div class="" style="left:196px;top:529px;width:580px;height:2px;background:#fbfbe8"></div><div class="" style="left:775px;top:223px;width:1px;height:308px;background:#fbfbe8"></div><div class="" style="left:776px;top:223px;width:1px;height:309px;background:#000"></div><div class="" style="left:197px;top:531px;width:580px;height:1px;background:#000"></div><div class="" style="left:196px;top:221px;width:580px;height:20px;background:#6699cc;border-radius:2px 2px 0 0"></div><svg style="left:198px;top:223px" width="17" height="17" viewBox="0 0 17 17"><path d="M6 -0.5 C10 -0.5 12 2 12 5 L12 11 L3 13 C1 11.5 -0.5 9 -0.5 5.5 C-0.5 2 2.5 -0.5 6 -0.5 Z" fill="#00008a"/><path d="M0 4 C0.5 2.5 1.5 1.5 3 1 L3.5 3 L3 8 L1 9 Z" fill="#60b870"/><rect x="1" y="0" width="2" height="2" fill="#c0b8f0"/><rect x="4" y="1" width="2" height="2" fill="#c0b8f0"/><rect x="6.5" y="-0.5" width="4" height="3" fill="#0000e0"/><rect x="3" y="4" width="14" height="13" fill="#000"/><rect x="4" y="5" width="12" height="11" fill="#fff"/><path d="M9.8 5.6 L4.6 12 L7.6 12 L4.8 15.8 L12.2 9.2 L9.4 9.2 L12.6 5.6 Z" fill="#ffff00" stroke="#00007a" stroke-width="0.8"/><rect x="11" y="6" width="3.5" height="2" fill="#0000e0"/><rect x="10.5" y="9" width="4" height="1" fill="#ff0000"/><rect x="10" y="11" width="3.5" height="1" fill="#ff0000"/><rect x="9" y="13" width="3" height="1" fill="#ff0000"/><rect x="12" y="12.5" width="3.5" height="3" fill="#0000e0"/><rect x="14.5" y="14.5" width="1" height="1" fill="#fff"/></svg><div class="t" style="left:216.5px;top:224.78px;font-size:12.4px;color:#eef4e0;transform:scaleX(1.0187);transform-origin:0 0;">Emailadressen</div><svg style="left:729px;top:226px" width="44" height="12" viewBox="0 0 44 12"><rect x="0" y="8" width="8" height="2" fill="#6b6b5c"/><path d="M9.5 0.5 L4 6" stroke="#6b6b5c" stroke-width="2"/><path d="M3.8 2 L3.8 6.2 L8 6.2" stroke="#6b6b5c" stroke-width="2" fill="none"/><rect x="16" y="0" width="10" height="2" fill="#6b6b5c"/><rect x="24.5" y="0" width="2" height="10" fill="#6b6b5c"/><path d="M16.5 9.5 L21.5 4.5" stroke="#6b6b5c" stroke-width="2"/><path d="M17.8 4.3 L21.7 4.3 L21.7 8.2" stroke="#6b6b5c" stroke-width="2" fill="none"/><path d="M32.5 0.5 L41.5 9.5 M41.5 0.5 L32.5 9.5" stroke="#6b6b5c" stroke-width="2.1"/></svg><div class="t" style="left:217.5px;top:263.51px;font-size:13.8px;color:#000;transform:scaleX(0.9429);transform-origin:0 0;">Variante</div><div class="t" style="left:313px;top:263.51px;font-size:13.8px;color:#000;transform:scaleX(0.9423);transform-origin:0 0;">Adresse</div><div style="left:218px;top:280px;width:92px;height:18px;background:#fff;border:1px solid #e4e6cc;border-top-color:#8a8a78;border-left-color:#9a9a86;border-radius:2px"></div><div style="left:314px;top:280px;width:428px;height:18px;background:#d8d8d8;border:1px solid #e4e6cc;border-top-color:#8a8a78;border-left-color:#9a9a86;border-radius:2px"></div><div style="left:218px;top:302px;width:92px;height:18px;background:#fff;border:1px solid #e4e6cc;border-top-color:#8a8a78;border-left-color:#9a9a86;border-radius:2px"></div><div style="left:314px;top:302px;width:428px;height:18px;background:#fff;border:1px solid #e4e6cc;border-top-color:#8a8a78;border-left-color:#9a9a86;border-radius:2px"></div><div style="left:218px;top:323px;width:92px;height:18px;background:#fff;border:1px solid #e4e6cc;border-top-color:#8a8a78;border-left-color:#9a9a86;border-radius:2px"></div><div style="left:314px;top:323px;width:428px;height:18px;background:#fff;border:1px solid #e4e6cc;border-top-color:#8a8a78;border-left-color:#9a9a86;border-radius:2px"></div><div style="left:218px;top:344px;width:92px;height:18px;background:#fff;border:1px solid #e4e6cc;border-top-color:#8a8a78;border-left-color:#9a9a86;border-radius:2px"></div><div style="left:314px;top:344px;width:428px;height:18px;background:#fff;border:1px solid #e4e6cc;border-top-color:#8a8a78;border-left-color:#9a9a86;border-radius:2px"></div><div style="left:218px;top:365px;width:92px;height:18px;background:#fff;border:1px solid #e4e6cc;border-top-color:#8a8a78;border-left-color:#9a9a86;border-radius:2px"></div><div style="left:314px;top:365px;width:428px;height:18px;background:#fff;border:1px solid #e4e6cc;border-top-color:#8a8a78;border-left-color:#9a9a86;border-radius:2px"></div><svg style="left:0px;top:0px;mix-blend-mode:darken" width="988" height="697" viewBox="0 0 988 697"><path d="M299 280 Q299 278 301 278 L350 278.3 C380 279 395 283 410 283 C440 283 460 282.5 478 281.5 C495 280.5 505 278 516 277 L518 277.5 L518.5 297.5 C505 299 490 300 466 303 C445 306 420 306.5 387 306.5 C370 306 360 304.5 351 303 C335 301 320 299 299 298.5 Z" fill="#ffe600"/></svg><div class="t" style="left:220px;top:283.51px;font-size:13.8px;color:#000;transform:scaleX(0.9426);transform-origin:0 0;">An</div><div class="t" style="left:316px;top:283.51px;font-size:13.8px;color:#000;transform:scaleX(0.9333);transform-origin:0 0;">edmnetz@stadtwerke-ilmenau.de</div><div style="left:746px;top:280px;width:9px;height:102px;background:#f4f4e4;border:1px solid #d4d8b4;border-radius:5px"></div><div class="" style="left:747px;top:293px;width:1px;height:77px;background:#8888cc"></div><div class="" style="left:755px;top:293px;width:1px;height:77px;background:#8888cc"></div><div class="" style="left:747px;top:293px;width:9px;height:1px;background:#8a8a78"></div><div class="" style="left:747px;top:369px;width:9px;height:1px;background:#8a8a78"></div><svg style="left:747px;top:284px" width="10" height="6" viewBox="0 0 10 6"><path d="M1 5.5 L9 5.5 L5 1 Z" fill="#666"/></svg><svg style="left:747px;top:374px" width="10" height="6" viewBox="0 0 10 6"><path d="M1 0.5 L9 0.5 L5 5 Z" fill="#666"/></svg><svg style="left:748px;top:325px" width="8" height="16" viewBox="0 0 8 16"><path d="M1 5 L3 3 M5 3 L7 1 M1 9 L3 7 M5 7 L7 5 M5 12 L7 10" stroke="#9a9a80" stroke-width="0.8"/></svg><svg style="left:217px;top:485px" width="12" height="12" viewBox="0 0 12 12"><rect x="0" y="0" width="12" height="12" fill="#fff"/><rect x="0.5" y="0.5" width="10.5" height="10.5" fill="#f4f4e4" stroke="#a8a070"/></svg><div class="t" style="left:231px;top:484.51px;font-size:13.8px;color:#aca47c;transform:scaleX(0.9331);transform-origin:0 0;">Email signieren</div><svg style="left:361px;top:485px" width="12" height="12" viewBox="0 0 12 12"><rect x="0" y="0" width="12" height="12" fill="#fff"/><rect x="0.5" y="0.5" width="10.5" height="10.5" fill="#fff" stroke="#a8a070"/></svg><div class="t" style="left:375.5px;top:484.51px;font-size:13.8px;color:#000;transform:scaleX(0.9308);transform-origin:0 0;">Email verschlüsseln</div>
</body></html>
